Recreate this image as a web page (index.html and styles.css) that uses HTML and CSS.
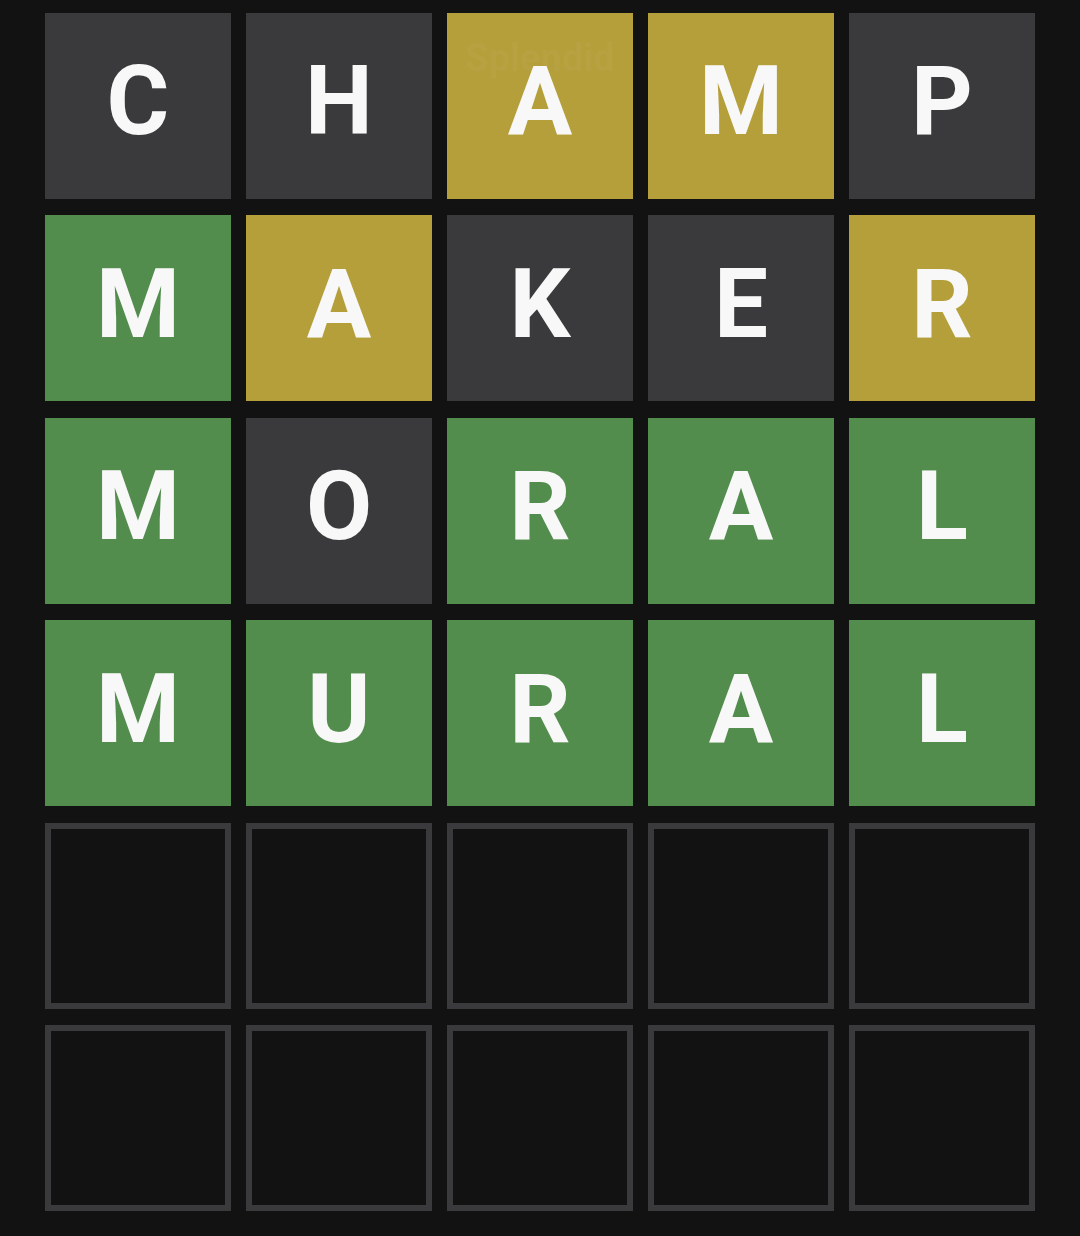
FILE: index.html
```html
<!DOCTYPE html>
<html>
<head>
<meta charset="utf-8">
<link rel="stylesheet" href="styles.css">
</head>
<body>
<div class="board">
  <div class="tile absent">C</div>
  <div class="tile absent">H</div>
  <div class="tile present toast-host"><span class="toast">Splendid</span><span class="letter">A</span></div>
  <div class="tile present">M</div>
  <div class="tile absent">P</div>

  <div class="tile correct">M</div>
  <div class="tile present">A</div>
  <div class="tile absent">K</div>
  <div class="tile absent">E</div>
  <div class="tile present">R</div>

  <div class="tile correct">M</div>
  <div class="tile absent">O</div>
  <div class="tile correct">R</div>
  <div class="tile correct">A</div>
  <div class="tile correct">L</div>

  <div class="tile correct">M</div>
  <div class="tile correct">U</div>
  <div class="tile correct">R</div>
  <div class="tile correct">A</div>
  <div class="tile correct">L</div>

  <div class="tile empty"></div>
  <div class="tile empty"></div>
  <div class="tile empty"></div>
  <div class="tile empty"></div>
  <div class="tile empty"></div>

  <div class="tile empty"></div>
  <div class="tile empty"></div>
  <div class="tile empty"></div>
  <div class="tile empty"></div>
  <div class="tile empty"></div>
</div>
</body>
</html>
```
FILE: styles.css
```css
html, body {
  margin: 0;
  padding: 0;
  background: #121213;
  width: 1080px;
  height: 1236px;
  overflow: hidden;
}
.board {
  display: grid;
  grid-template-columns: repeat(5, 186px);
  grid-template-rows: repeat(6, 186px);
  column-gap: 15px;
  row-gap: 16.4px;
  padding: 13px 0 0 45px;
}
.tile {
  box-sizing: border-box;
  display: flex;
  align-items: center;
  justify-content: center;
  padding-bottom: 8px;
  color: #f8f8f8;
  font-family: Roboto, "Liberation Sans", Arial, sans-serif;
  font-weight: bold;
  font-size: 96px;
  line-height: 0.72;
}
.absent { background: #3a3a3c; }
.present { background: #b59f3b; }
.correct { background: #538d4e; }
.empty {
  background: #121213;
  border: 6px solid #3a3a3c;
}
.toast-host { position: relative; }
.letter {
  position: relative;
  z-index: 1;
}
.toast {
  position: absolute;
  left: 0;
  right: 0;
  top: 30px;
  text-align: center;
  font-family: Roboto, "Liberation Sans", Arial, sans-serif;
  font-weight: bold;
  font-size: 38px;
  line-height: 0.8;
  color: #b7a141;
}
```
